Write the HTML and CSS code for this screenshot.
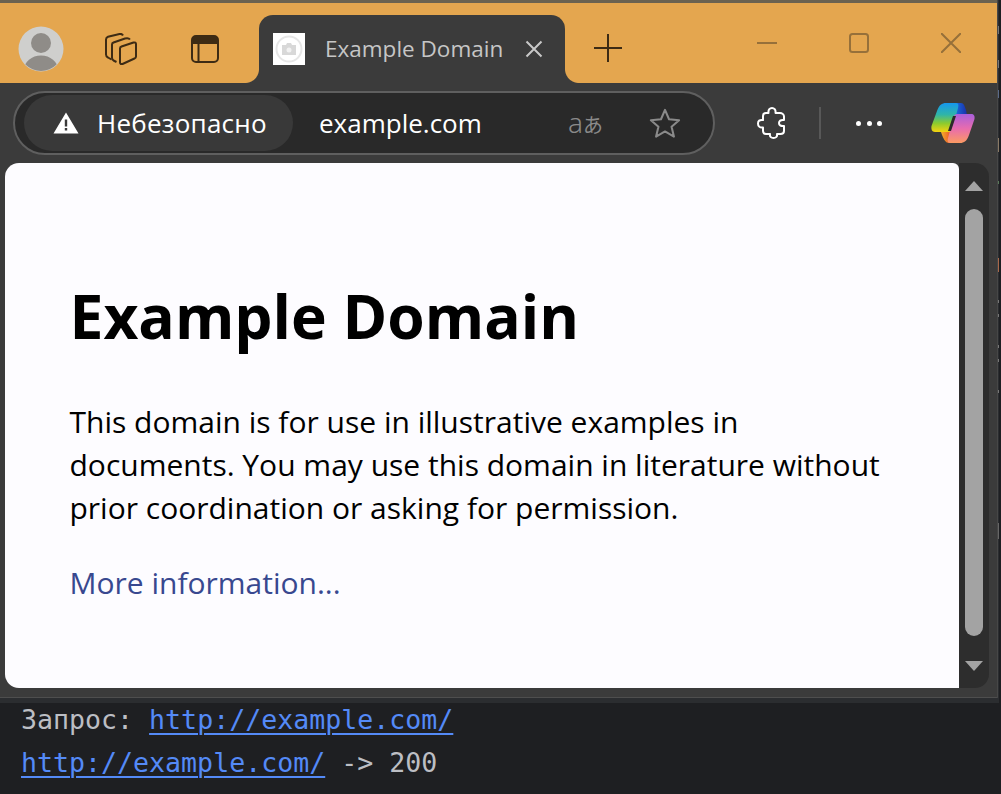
FILE: index.html
```html
<!DOCTYPE html>
<html lang="ru">
<head>
<meta charset="utf-8">
<title>Example Domain</title>
<link rel="stylesheet" href="styles.css">
</head>
<body>
<div class="screen">
  <div class="window">
    <div class="tabstrip">
      <svg class="avatar" viewBox="0 0 46 46"><defs><clipPath id="ac"><circle cx="23" cy="23" r="22"/></clipPath></defs><circle cx="23" cy="23" r="22.5" fill="#cfcfcd"/><g clip-path="url(#ac)" fill="#8f8c88"><circle cx="23" cy="17" r="10"/><ellipse cx="23" cy="44" rx="17" ry="14.5"/></g></svg>
      <svg class="ic-tabs" viewBox="0 0 32 32" fill="none" stroke="#3d2b14" stroke-width="2" stroke-linejoin="round"><path d="M6.500 26.500 L3 24.500 Q1 23.500 1 21.500 V6.500 Q1 4.500 3 3.800 L14.500 1 Q17 0.500 18 2.500"/><path d="M11.500 29 L8.500 27.500 Q7 26.500 7 24.500 V11.500 Q7 10 8.500 9.500 L20 5.500 Q23.500 4.500 25 6.500"/><path d="M15 15.500 Q15 14 16.500 13.500 L28.500 9.500 Q31 9 31 11 V23.500 Q31 25 29.500 25.500 L17.500 31 Q15 31.500 15 29.500 Z"/></svg>
      <svg class="ic-side" viewBox="0 0 28 28"><rect x="1" y="1" width="26" height="26" rx="4" fill="none" stroke="#3d2b14" stroke-width="2"/><path d="M1 9 V5 a4 4 0 0 1 4-4 H23 a4 4 0 0 1 4 4 V9 Z" fill="#3d2b14"/><path d="M7.500 8 V27" stroke="#3d2b14" stroke-width="2"/></svg>
      <div class="tab">
        <svg class="favicon" viewBox="0 0 32 32"><rect width="32" height="32" fill="#fff"/><circle cx="16" cy="16" r="12.500" fill="none" stroke="#e6e6e6" stroke-width="2"/><path d="M9 12h4l1-2h4l1 2h4v10H9z" fill="#d8d8d8"/><circle cx="16" cy="17" r="2.500" fill="#f2f2f2"/></svg>
        <span class="tab-title">Example Domain</span>
        <svg class="tab-close" viewBox="0 0 18 18" fill="none" stroke="#c8c8c8" stroke-width="2"><path d="M1.500 1.500 L16.500 16.500 M16.500 1.500 L1.500 16.500"/></svg>
      </div>
      <svg class="ic-plus" viewBox="0 0 28 28" fill="none" stroke="#3d2b14" stroke-width="2"><path d="M0 14 H28 M14 0 V28"/></svg>
      <div class="winctl">
        <svg class="wc" viewBox="0 0 20 20" fill="none" stroke="#96703a" stroke-width="2"><path d="M0 10 H20"/></svg>
        <svg class="wc" viewBox="0 0 20 20" fill="none" stroke="#96703a" stroke-width="2"><rect x="1" y="1" width="18" height="18" rx="2.500"/></svg>
        <svg class="wc" viewBox="0 0 20 20" fill="none" stroke="#96703a" stroke-width="2"><path d="M0 0 L20 20 M20 0 L0 20"/></svg>
      </div>
    </div>
    <div class="toolbar">
      <div class="addressbar">
        <div class="security">
          <svg class="warn" viewBox="0 0 26 22"><path fill-rule="evenodd" fill="#fff" d="M13 0.500 L25.500 21.500 H0.500 Z M11.800 7.500 V14.500 H14.200 V7.500 Z M11.800 16 V18.500 H14.200 V16 Z"/></svg>
          <span class="sec-text">Небезопасно</span>
        </div>
        <span class="url">example.com</span>
        <span class="translate"><span class="tr-latin">a</span><span class="tr-kana">あ</span></span>
        <svg class="star" viewBox="0 0 34 32" fill="none" stroke="#8a8a8a" stroke-width="2.200" stroke-linejoin="round"><path d="M17 2 L21.300 12 L32 13 L24 20 L26.500 30.500 L17 25 L7.500 30.500 L10 20 L2 13 L12.700 12 Z"/></svg>
      </div>
      <svg class="puzzle" viewBox="0 0 30 32" fill="none" stroke="#fff" stroke-width="2" stroke-linejoin="round"><path d="M9 6 H11.500 C11 2.500 13 1 15 1 C17 1 19 2.500 18.500 6 H23 C25 6 27 7.500 27 9.500 V13 C23.500 12.500 22 14 22 16 C22 18 23.500 19.500 27 19 V24 C27 26 25.500 27 23.500 27 H20 C20.500 30 18.500 31 16.500 31 C14.500 31 12.500 30 13 27 H9 C7 27 6 25.500 6 24 V20.500 C2.500 21 1 19 1 16.500 C1 14 2.500 12.500 6 13 V9 C6 7 7 6 9 6 Z"/></svg>
      <span class="divider"></span>
      <div class="dots"><i></i><i></i><i></i></div>
      <svg class="copilot" viewBox="0 0 44 40">
        <defs>
          <linearGradient id="g1" x1="0" y1="0" x2="0" y2="1"><stop offset="0" stop-color="#1597ee"/><stop offset=".4" stop-color="#2fb5a8"/><stop offset=".7" stop-color="#8ccb2e"/><stop offset="1" stop-color="#f5d20f"/></linearGradient>
          <linearGradient id="g2" x1="0" y1="0" x2="0" y2="1"><stop offset="0" stop-color="#a95fdc"/><stop offset=".5" stop-color="#e86cae"/><stop offset="1" stop-color="#fb9a62"/></linearGradient>
          <linearGradient id="g3" x1="0" y1="0" x2="1" y2="0"><stop offset="0" stop-color="#1a6fe0"/><stop offset="1" stop-color="#1a2fa8"/></linearGradient>
          <linearGradient id="g4" x1="0" y1="0" x2="1" y2="0"><stop offset="0" stop-color="#f4b02a"/><stop offset="1" stop-color="#e8402a"/></linearGradient>
        </defs>
        <path fill="url(#g3)" d="M24 0 H30 C33 0 33.500 3 35 7 L36 12 H24 Z"/>
        <path fill="url(#g4)" d="M10 29 H22 L20 40 H18 C14 40 12 35 10 29 Z"/>
        <path fill="url(#g1)" d="M15 0 H25 C28 0 27.500 3 27 5 L21 27 C20.500 29 19 29 17 29 H4 C1 29 0 26 0.500 23 L6 8 C8 2 11 0 15 0 Z"/>
        <path fill="url(#g2)" d="M27 11 H40 C43 11 44 13 43.500 16 L38 32 C36 38 33 40 29 40 H19 C16 40 16.500 37 17 35 L23 13 C23.500 11.500 25 11 27 11 Z"/>
        <path fill="#2a2a2a" d="M22 13 H25 L20 28 H17 Z"/>
      </svg>
    </div>
    <div class="viewport">
      <main class="page">
        <h1 class="page-title">Example Domain</h1>
        <p class="page-text">This domain is for use in illustrative examples in documents. You may use this domain in literature without prior coordination or asking for permission.</p>
        <a class="page-link" href="#">More information...</a>
      </main>
      <div class="scrollbar">
        <span class="arrow-up"></span>
        <span class="thumb"></span>
        <span class="arrow-down"></span>
      </div>
    </div>
    <div class="window-foot"></div>
  </div>
  <div class="edge">
    <span class="mark mark-a"></span>
    <span class="mark mark-b"></span>
    <span class="mark mark-c"></span>
    <span class="mark mark-d"></span>
    <span class="mark mark-e"></span>
    <span class="mark mark-f"></span>
    <span class="mark mark-g"></span>
    <span class="mark mark-h"></span>
    <span class="mark mark-g"></span>
    <span class="mark mark-h"></span>
    <span class="mark mark-g"></span>
    <span class="mark mark-i"></span>
  </div>
  <div class="edge-outer"></div>
</div>
<div class="terminal">
  <div class="term-line">Запрос: <a class="term-link" href="#">http://example.com/</a></div>
  <div class="term-line"><a class="term-link" href="#">http://example.com/</a> -&gt; 200</div>
</div>
</body>
</html>
```
FILE: styles.css
```css
* { box-sizing: border-box; }
html, body { margin: 0; padding: 0; }
body { width: 1001px; height: 794px; overflow: hidden; background: #1e1f22; font-family: "Open Sans", "Noto Sans", sans-serif; }
svg { display: block; flex: none; }

.screen { display: flex; height: 703px; background: #2b2d30; }
.window { width: 998px; height: 698px; display: flex; flex-direction: column; background: #6b6250; border-right: 1px solid #474747; padding-top: 3px; }
.edge { width: 1px; display: flex; flex-direction: column; padding-top: 26px; }
.edge-outer { width: 2px; background: #1e1f22; }
.mark { display: block; width: 1px; background: #777; }
.mark-a { height: 8px; }
.mark-b { height: 8px; margin-top: 26px; }
.mark-c { height: 8px; margin-top: 22px; background: #5a6a88; }
.mark-d { height: 14px; margin-top: 40px; background: #8a7a66; }
.mark-e { height: 3px; margin-top: 29px; background: #5a7a5a; }
.mark-f { height: 14px; margin-top: 74px; background: #a8684a; }
.mark-g { height: 3px; margin-top: 28px; }
.mark-h { height: 3px; margin-top: 11px; }
.mark-i { height: 16px; margin-top: 130px; background: #666; }

.tabstrip { height: 80px; flex: none; background: #e4a64f; display: flex; align-items: flex-start; }
.avatar { width: 46px; height: 46px; margin: 23px 0 0 18px; }
.ic-tabs { width: 32px; height: 32px; margin: 30px 0 0 41px; }
.ic-side { width: 28px; height: 28px; margin: 32px 0 0 54px; }

.tab { width: 306px; height: 68px; margin: 12px 0 0 40px; background: #3b3b3b; border-radius: 14px 14px 0 0; display: flex; align-items: center; padding: 0 0 1px 14px; position: relative; }
.tab::before, .tab::after { content: ""; position: absolute; bottom: 0; width: 14px; height: 14px; }
.tab::before { left: -14px; background: radial-gradient(circle at 0 0, #e4a64f 13.500px, #3b3b3b 14.500px); }
.tab::after { right: -14px; background: radial-gradient(circle at 100% 0, #e4a64f 13.500px, #3b3b3b 14.500px); }
.favicon { width: 32px; height: 32px; }
.tab-title { margin-left: 20px; font-size: 22.500px; color: #c6c6c6; white-space: nowrap; width: 179px; }
.tab-close { width: 18px; height: 18px; margin-left: 21px; }

.ic-plus { width: 28px; height: 28px; margin: 31px 0 0 29px; }
.winctl { display: flex; gap: 72px; margin: 30px 0 0 135px; }
.wc { width: 20px; height: 20px; }

.toolbar { height: 80px; flex: none; background: #3b3b3b; display: flex; align-items: center; padding: 0 0 0 13px; }
.addressbar { width: 702px; height: 64px; border: 2px solid #5f5f5f; border-radius: 32px; background: #292929; display: flex; align-items: center; padding-left: 9px; }
.security { width: 269px; height: 56px; border-radius: 28px; background: #393939; display: flex; align-items: center; padding-left: 29px; }
.warn { width: 26px; height: 22px; }
.sec-text { margin-left: 18px; font-size: 26px; letter-spacing: 0.250px; color: #fff; white-space: nowrap; }
.url { margin-left: 26px; font-size: 26px; color: #fff; width: 164px; white-space: nowrap; }
.translate { margin-left: 85px; color: #8a8a8a; width: 36px; display: flex; align-items: baseline; white-space: nowrap; font-family: "Noto Sans", "Noto Sans CJK JP", sans-serif; }
.tr-latin { font-size: 28px; font-weight: 300; line-height: 30px; }
.tr-kana { font-size: 20px; line-height: 30px; font-family: "Noto Sans CJK JP", sans-serif; }
.star { width: 32px; height: 30px; margin-left: 45px; }
.puzzle { width: 30px; height: 32px; margin-left: 42px; }
.divider { width: 2px; height: 32px; background: #585858; margin-left: 32px; }
.dots { display: flex; gap: 5.500px; margin-left: 35px; }
.dots i { width: 5px; height: 5px; border-radius: 50%; background: #fff; }
.copilot { width: 44px; height: 40px; margin-left: 49px; }

.viewport { height: 525px; flex: none; background: #3b3b3b; display: flex; padding-left: 5px; }
.page { width: 954px; background: #fdfcff; border-radius: 14px 6px 0 14px; padding: 116px 64px 0 64.500px; }
.page-title { margin: 0 0 47px; font-size: 60.500px; line-height: 74px; font-weight: 700; color: #000; }
.page-text { margin: 0 0 32px; font-size: 30px; line-height: 43px; color: #000; width: 830px; }
.page-link { font-size: 30px; line-height: 43px; color: #38488f; text-decoration: none; }

.scrollbar { width: 30px; background: #2d2d2d; border-radius: 0 14px 14px 0; display: flex; flex-direction: column; align-items: center; }
.arrow-up { width: 0; height: 0; margin-top: 18px; border: 9px solid transparent; border-top: 0; border-bottom: 10px solid #a3a3a3; }
.thumb { width: 18px; height: 427px; border-radius: 9px; background: #a3a3a3; margin-top: 18px; }
.arrow-down { width: 0; height: 0; margin-top: 25px; border: 9px solid transparent; border-bottom: 0; border-top: 10px solid #a3a3a3; }

.window-foot { flex: 1; background: #3b3b3b; border-bottom: 1px solid #4e4e4e; }

.terminal { padding: 0 0 0 21px; margin-top: -5px; font-family: "DejaVu Sans Mono", "Liberation Mono", monospace; font-size: 26.600px; line-height: 43px; color: #bcbec4; }
.term-line { white-space: pre; height: 43px; }
.term-link { color: #548af7; text-decoration: underline; text-decoration-thickness: 2px; text-underline-offset: 4px; }
```
